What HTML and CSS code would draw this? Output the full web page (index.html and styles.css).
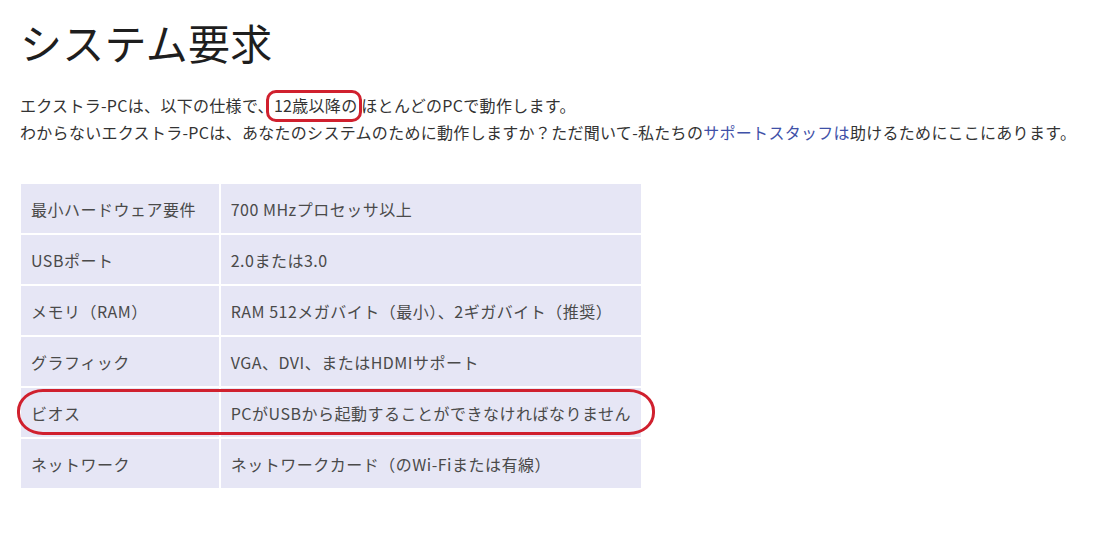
FILE: index.html
```html
<!DOCTYPE html>
<html lang="ja">
<head>
<meta charset="utf-8">
<title>システム要求</title>
<link rel="stylesheet" href="styles.css">
</head>
<body>
<main class="page">
  <h1 class="title">システム要求</h1>
  <p class="intro">
    エクストラ-PCは、以下の仕様で、<span class="mark">12歳以降の</span> ほとんどのPCで動作します。<br>
    わからないエクストラ-PCは、あなたのシステムのために動作しますか？ただ聞いて-私たちの<a class="link" href="#">サポートスタッフは</a>助けるためにここにあります。
  </p>
  <div class="table-wrap">
    <table class="specs">
      <tr><td class="k">最小ハードウェア要件</td><td class="v">700 MHzプロセッサ以上</td></tr>
      <tr><td class="k">USBポート</td><td class="v">2.0または3.0</td></tr>
      <tr><td class="k">メモリ（RAM）</td><td class="v">RAM 512メガバイト（最小）、2ギガバイト（推奨）</td></tr>
      <tr><td class="k">グラフィック</td><td class="v">VGA、DVI、またはHDMIサポート</td></tr>
      <tr><td class="k">ビオス</td><td class="v">PCがUSBから起動することができなければなりません</td></tr>
      <tr><td class="k">ネットワーク</td><td class="v">ネットワークカード（のWi-Fiまたは有線）</td></tr>
    </table>
    <div class="circle-row"></div>
  </div>
</main>
</body>
</html>
```
FILE: styles.css
```css
html, body {
  margin: 0;
  padding: 0;
  background: #ffffff;
}
body {
  font-family: "Noto Sans CJK JP", "Noto Sans", sans-serif;
  color: #333333;
}
.page {
  padding: 12px 20px 0 20px;
}
.title {
  margin: 0;
  font-size: 42px;
  font-weight: 400;
  line-height: 60px;
  color: #1e1e1e;
  letter-spacing: 0.3px;
}
.intro {
  margin: 20px 0 0 0;
  font-size: 16px;
  line-height: 27px;
  color: #333333;
  letter-spacing: 0.3px;
  white-space: nowrap;
}
.link {
  color: #3f51a8;
  text-decoration: none;
}
.mark {
  position: relative;
}
.mark::after {
  content: "";
  position: absolute;
  left: -8px;
  right: -5px;
  top: -3px;
  bottom: -5px;
  border: 3px solid #d0202e;
  border-radius: 10px;
}
.table-wrap {
  position: relative;
  margin-top: 38px;
  margin-left: 1px;
  width: 620px;
}
.specs {
  border-collapse: collapse;
  width: 620px;
  background: #e6e6f5;
  font-size: 16px;
  color: #4a4a4a;
}
.specs td {
  border: 2px solid #ffffff;
  height: 49px;
  padding: 0 10px;
  vertical-align: middle;
  letter-spacing: 0.5px;
  white-space: nowrap;
}
.specs tr:first-child td { border-top: 0; }
.specs tr:last-child td { border-bottom: 0; }
.specs td.k {
  width: 178px;
  border-left: 0;
}
.specs td.v {
  border-right: 0;
}
.circle-row {
  position: absolute;
  left: -4px;
  top: 205px;
  width: 632px;
  height: 40px;
  border: 3px solid #d0202e;
  border-radius: 26px / 22px;
}
```
